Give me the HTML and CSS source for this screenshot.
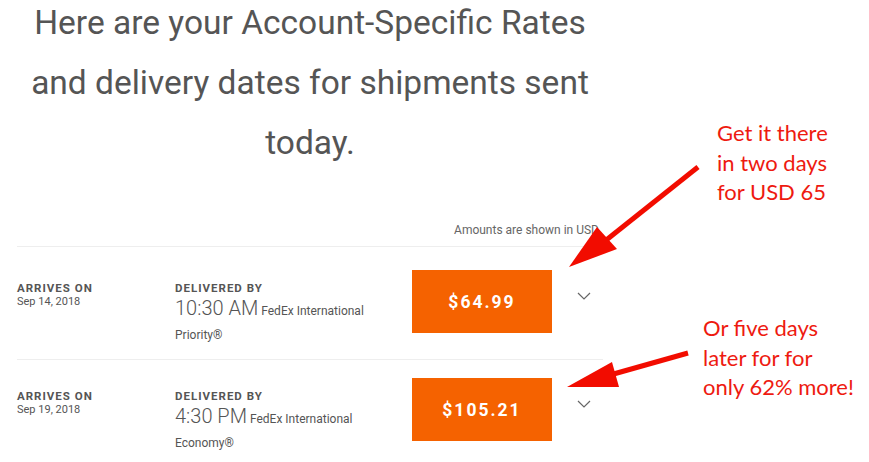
FILE: index.html
```html
<!DOCTYPE html>
<html lang="en">
<head>
    <meta charset="UTF-8">
    <meta name="viewport" content="width=device-width, initial-scale=1.0">
    <title>Rates</title>
    <link rel="stylesheet" href="styles.css">
</head>
<body>
    <div class="page">
        <div class="rates">
            <h1>Here are your Account-Specific Rates and delivery dates for shipments sent today.</h1>
            <div class="amounts">Amounts are shown in USD</div>

            <div class="rate-row first">
                <div class="col-arrives">
                    <div class="label">ARRIVES ON</div>
                    <div class="date">Sep 14, 2018</div>
                </div>
                <div class="col-delivered">
                    <div class="label">DELIVERED BY</div>
                    <div class="service"><span class="time">10:30 AM</span> FedEx International Priority®</div>
                </div>
                <button class="price">$64.99</button>
                <svg class="chevron" width="14" height="8" viewBox="0 0 14 8"><polyline points="1,1 7,7 13,1" fill="none" stroke="#666" stroke-width="1.2"/></svg>
            </div>

            <div class="rate-row last">
                <div class="col-arrives">
                    <div class="label">ARRIVES ON</div>
                    <div class="date">Sep 19, 2018</div>
                </div>
                <div class="col-delivered">
                    <div class="label">DELIVERED BY</div>
                    <div class="service"><span class="time">4:30 PM</span> FedEx International Economy®</div>
                </div>
                <button class="price">$105.21</button>
                <svg class="chevron" width="14" height="8" viewBox="0 0 14 8"><polyline points="1,1 7,7 13,1" fill="none" stroke="#666" stroke-width="1.2"/></svg>
            </div>
        </div>

        <!-- red annotations drawn on top of the screenshot -->
        <svg class="arrows" width="869" height="462" viewBox="0 0 869 462">
            <line x1="698" y1="167" x2="600" y2="245" stroke="#f20c00" stroke-width="5"/>
            <polygon points="569,267 597,227 617,249" fill="#f20c00"/>
            <line x1="688" y1="353" x2="610" y2="375" stroke="#f20c00" stroke-width="5"/>
            <polygon points="567,387 612,362 619,387" fill="#f20c00"/>
        </svg>
        <div class="note note-top">Get it there<br>in two days<br>for USD 65</div>
        <div class="note note-bottom">Or five days<br>later for for<br>only 62% more!</div>
    </div>
</body>
</html>
```

FILE: styles.css
```css
body {
    margin: 0;
    background-color: #fff;
    font-family: Roboto, "Liberation Sans", sans-serif;
    color: #555;
}
.page {
    position: relative;
    width: 869px;
    height: 462px;
    overflow: hidden;
}
.rates {
    width: 586px;
    margin-left: 17px;
}
h1 {
    margin: -7px -10px 0;
    font-size: 33.5px;
    font-weight: 400;
    line-height: 60px;
    text-align: center;
    color: #555;
}
.amounts {
    margin-top: 50px;
    text-align: right;
    font-size: 12px;
    color: #666;
    padding-right: 4px;
    padding-bottom: 9px;
    border-bottom: 1px solid #eee;
}
.rate-row {
    display: flex;
    align-items: flex-start;
    box-sizing: border-box;
    height: 95px;
    padding-top: 18px;
    border-bottom: 1px solid #eee;
}
.rate-row.first {
    padding-top: 23px;
    height: 113px;
}
.rate-row.last {
    border-bottom: none;
}
.col-arrives {
    width: 158px;
    padding-top: 11px;
}
.col-delivered {
    width: 237px;
    padding-top: 11px;
}
.label {
    font-size: 11.5px;
    font-weight: 700;
    letter-spacing: 1px;
    color: #555;
    line-height: 14px;
}
.date {
    font-size: 11px;
    line-height: 14px;
    color: #555;
}
.service {
    margin-top: 3px;
    font-size: 12px;
    line-height: 24px;
    color: #555;
    width: 200px;
}
.time {
    font-size: 20px;
    font-weight: 300;
    line-height: 1;
    color: #555;
}
.price {
    width: 140px;
    height: 63px;
    border: none;
    background-color: #f56200;
    color: #fff;
    font-family: Roboto, "Liberation Sans", sans-serif;
    font-size: 17.5px;
    font-weight: 700;
    letter-spacing: 2px;
    cursor: pointer;
}
.chevron {
    margin: 22px 0 0 25px;
}
.arrows {
    position: absolute;
    left: 0;
    top: 0;
}
.note {
    position: absolute;
    font-family: Lato, "Open Sans", sans-serif;
    font-size: 22px;
    line-height: 29.5px;
    color: #ee1a10;
}
.note-top {
    left: 717px;
    top: 118px;
}
.note-bottom {
    left: 703px;
    top: 313px;
}
```
